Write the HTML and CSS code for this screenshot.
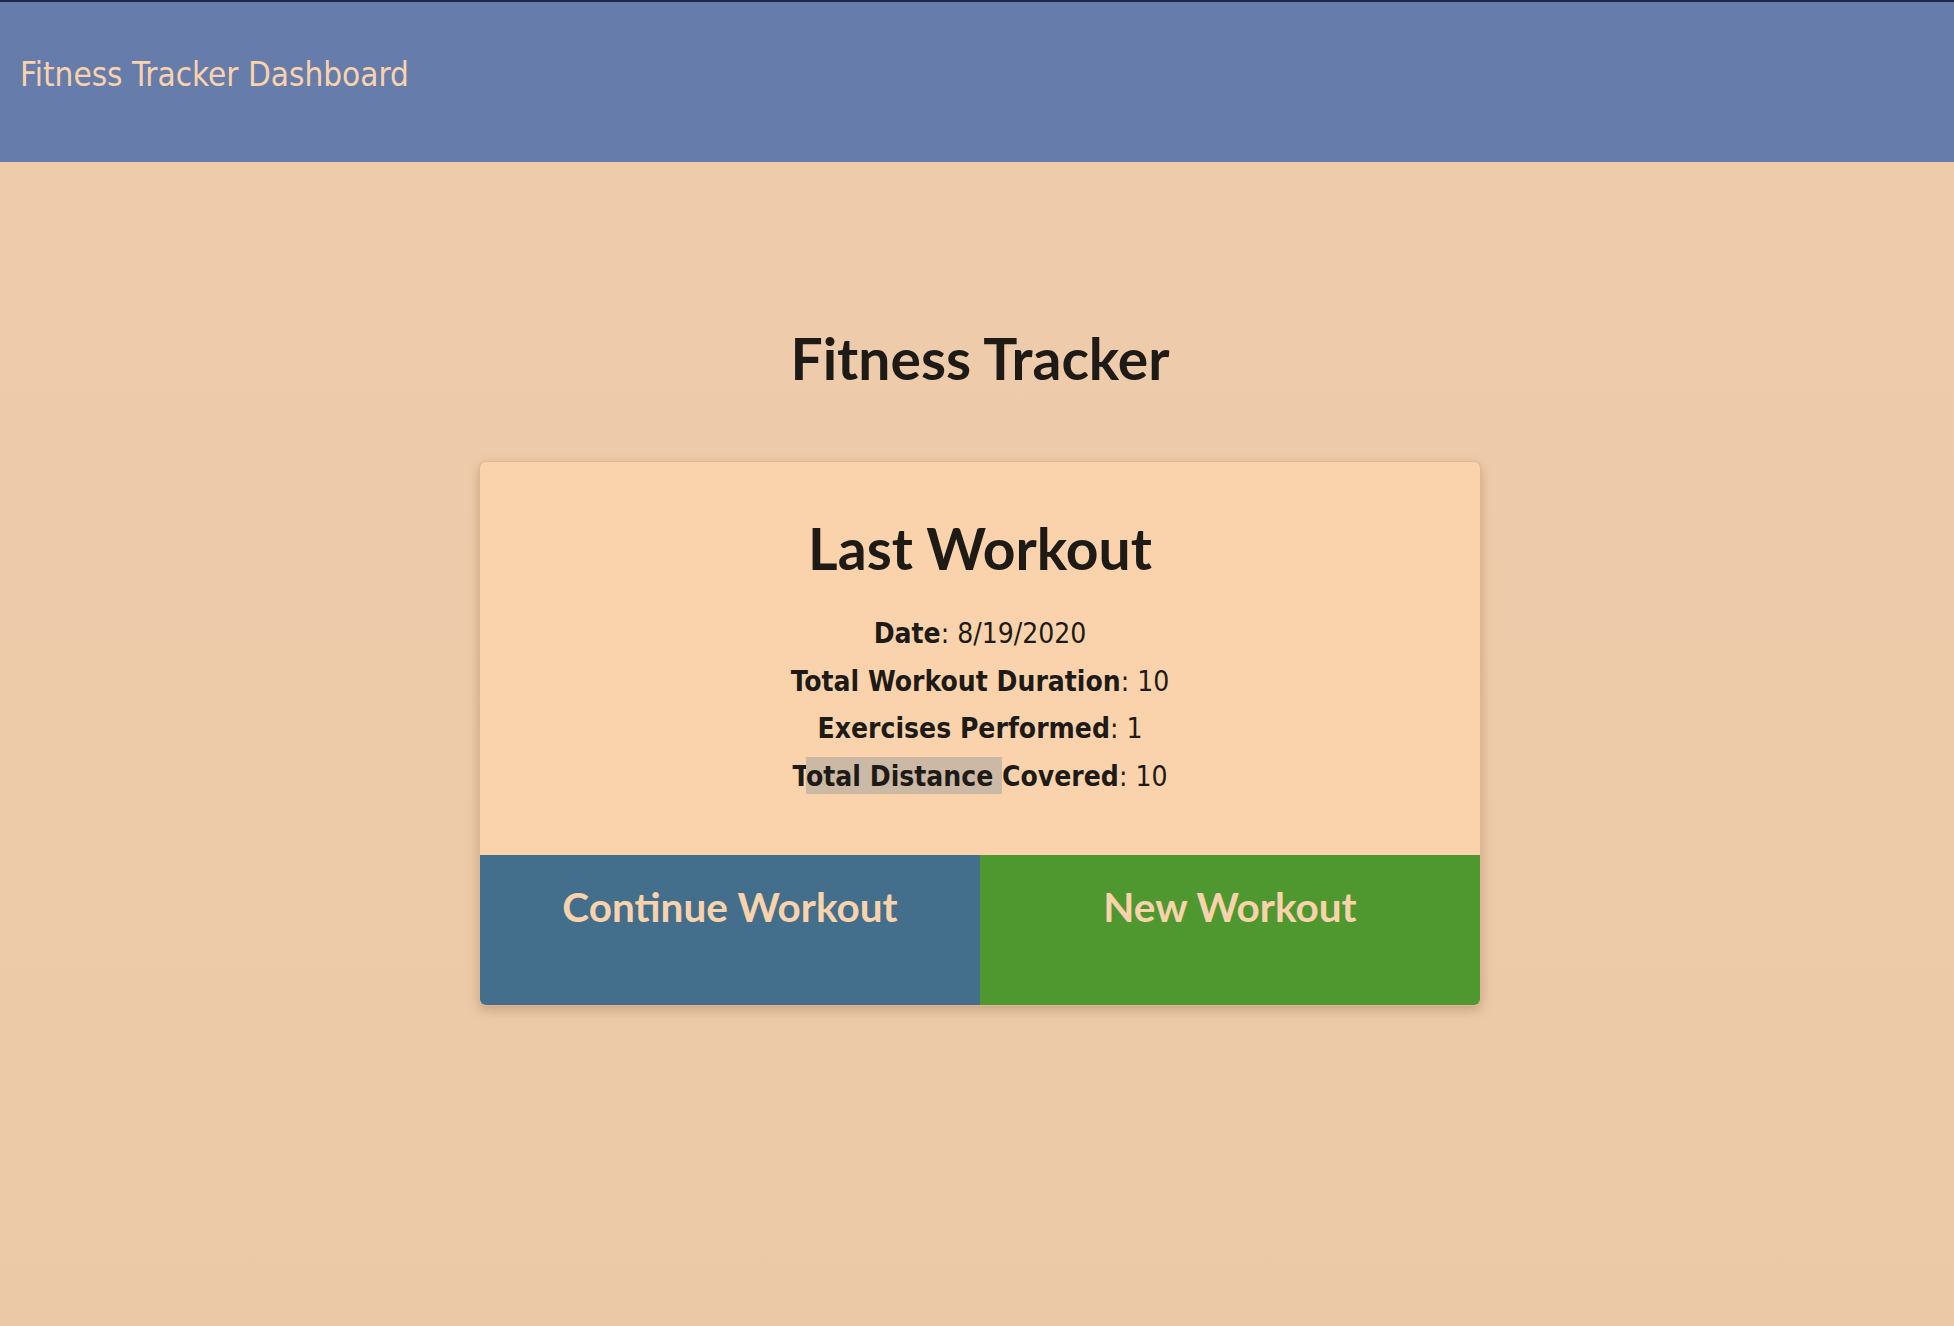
FILE: index.html
```html
<!DOCTYPE html>
<html lang="en">
<head>
<meta charset="utf-8">
<title>Fitness Tracker</title>
<link rel="stylesheet" href="styles.css">
</head>
<body>
<header class="topbar">
  <span class="brand">Fitness Tracker Dashboard</span>
</header>
<main class="main">
  <h1 class="page-title">Fitness Tracker</h1>
  <section class="card">
    <div class="card-body">
      <h2 class="card-title">Last Workout</h2>
      <p class="stat"><strong>Date</strong>: 8/19/2020</p>
      <p class="stat"><strong>Total Workout Duration</strong>: 10</p>
      <p class="stat"><strong>Exercises Performed</strong>: 1</p>
      <p class="stat"><strong>T<span class="sel">otal Distance </span>Covered</strong>: 10</p>
    </div>
    <div class="card-actions">
      <button class="action action-continue">Continue Workout</button>
      <button class="action action-new">New Workout</button>
    </div>
  </section>
</main>
</body>
</html>
```
FILE: styles.css
```css
html, body {
  margin: 0;
  padding: 0;
}
body {
  min-height: 1326px;
  background: linear-gradient(#efcdac, #ebc9a7);
  color: #1e1a16;
  font-family: "DejaVu Sans Condensed", "DejaVu Sans", sans-serif;
}
.topbar {
  height: 160px;
  border-top: 2px solid #1c2b4d;
  background: #667cab;
  box-sizing: content-box;
}
.brand {
  display: block;
  padding: 53px 0 0 20px;
  font-size: 33px;
  line-height: 40px;
  color: #fad3ac;
}
.main {
  display: flex;
  flex-direction: column;
  align-items: center;
  padding: 162px 0 0 6px;
}
.page-title {
  margin: 0;
  font-family: Lato, sans-serif;
  font-weight: 700;
  font-size: 57px;
  line-height: 68px;
  color: #1e1a16;
}
.card {
  margin-top: 69px;
  width: 1000px;
  border: 1px solid #dbb793;
  border-radius: 7px;
  background: #fad3ac;
  box-shadow: 0 4px 12px rgba(130, 90, 50, 0.35);
  overflow: hidden;
}
.card-body {
  padding: 51px 0 55px;
  text-align: center;
}
.card-title {
  margin: 0 0 27px;
  font-family: Lato, sans-serif;
  font-weight: 700;
  font-size: 57px;
  line-height: 70px;
}
.stat {
  margin: 0;
  font-size: 28px;
  line-height: 47.5px;
}
.stat strong {
  font-weight: 700;
}
.sel {
  background: #cbb9a6;
  padding: 3px 0 1px;
}
.card-actions {
  display: grid;
  grid-template-columns: 1fr 1fr;
}
.action {
  border: 0;
  margin: 0;
  height: 150px;
  padding: 28px 0 0;
  display: flex;
  justify-content: center;
  align-items: flex-start;
  font-family: Lato, sans-serif;
  font-weight: 700;
  font-size: 40.5px;
  line-height: 48px;
  color: #fad3ac;
  cursor: pointer;
}
.action-continue {
  background: #436f8d;
}
.action-new {
  background: #4f982f;
}
```
